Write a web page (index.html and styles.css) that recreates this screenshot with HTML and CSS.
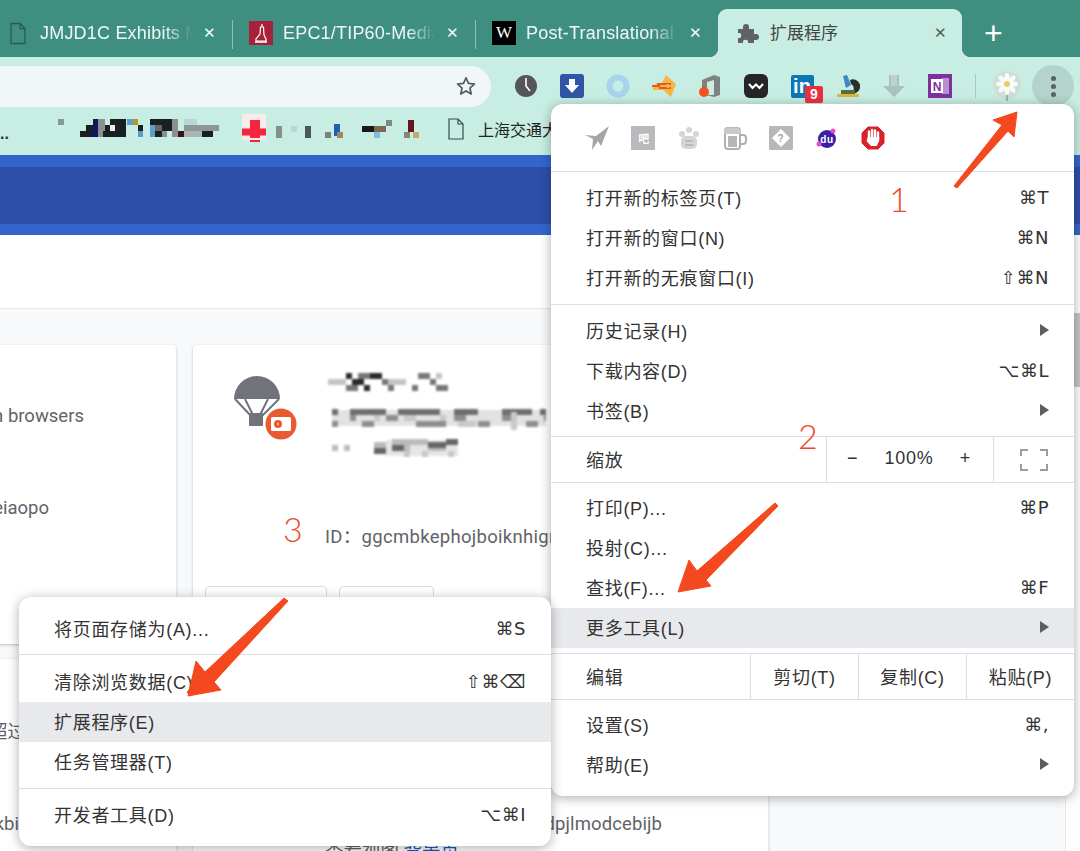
FILE: index.html
```html
<!DOCTYPE html>
<html lang="zh-CN">
<head>
<meta charset="utf-8">
<title>扩展程序</title>
<link rel="stylesheet" href="styles.css">
</head>
<body>
<div class="window">
  <div class="tabstrip">
    <div class="tab">
      <span class="fav"><svg width="24" height="24" viewBox="0 0 24 24"><path d="M5 2.500h9l5 5v15H5z M14 2.500v5h5" fill="none" stroke="#2c5a50" stroke-width="1.300"/></svg></span>
      <span class="tab-title">JMJD1C Exhibits M</span>
      <span class="tab-close">✕</span>
    </div>
    <div class="tab tab-sep">
      <span class="fav"><svg width="24" height="24" viewBox="0 0 24 24"><rect width="24" height="24" fill="#a8213a"/><path d="M13 3v3M11.500 6h3l.5 8 2 4v2H7v-2l4-5z" fill="none" stroke="#fff" stroke-width="1.200"/><path d="M6 21h12" stroke="#fff" stroke-width="1.500"/></svg></span>
      <span class="tab-title">EPC1/TIP60-Media</span>
      <span class="tab-close">✕</span>
    </div>
    <div class="tab tab-sep">
      <span class="fav fav-w">W</span>
      <span class="tab-title">Post-Translational</span>
      <span class="tab-close">✕</span>
    </div>
    <div class="tab tab-active">
      <span class="fav"><svg width="24" height="24" viewBox="0 0 24 24"><path d="M3 8h5V6a3 3 0 0 1 6 0v2h5v5h2a3 3 0 0 1 0 6h-2v3h-6v-2a3 3 0 0 0-5 0v2H3v-5h2a3 3 0 0 0 0-5H3z" fill="#5f6368"/></svg></span>
      <span class="tab-title">扩展程序</span>
      <span class="tab-close">✕</span>
    </div>
    <span class="new-tab">+</span>
  </div>

  <div class="toolbar">
    <div class="urlbar">
      <svg width="22" height="22" viewBox="0 0 24 24"><path d="M12 3l2.700 6.100 6.600.7-5 4.400 1.400 6.500-5.700-3.300-5.700 3.300 1.400-6.500-5-4.400 6.600-.7z" fill="none" stroke="#50585a" stroke-width="1.800" stroke-linejoin="round"/></svg>
    </div>
    <div class="ext-row">
      <span class="ext"><svg width="24" height="24" viewBox="0 0 24 24"><circle cx="12" cy="12" r="11" fill="#55565c"/><path d="M12 4v8l4 5" fill="none" stroke="#fff" stroke-width="1.600"/></svg></span>
      <span class="ext"><svg width="24" height="24" viewBox="0 0 24 24"><rect width="24" height="24" rx="3" fill="#2f56a4"/><path d="M9 5h6v6h4l-7 8-7-8h4z" fill="#fff"/></svg></span>
      <span class="ext"><svg width="24" height="24" viewBox="0 0 24 24"><circle cx="12" cy="12" r="8.500" fill="none" stroke="#a5d3f0" stroke-width="6"/></svg></span>
      <span class="ext"><svg width="26" height="26" viewBox="0 0 26 26"><path d="M15 2l10 9-5 13-8-7H2v-5l9-2z" fill="#f6b548"/><path d="M1 13h8M6 11h14M8 15h12" stroke="#e4591e" stroke-width="2"/><circle cx="17" cy="13" r="2" fill="#f6b548"/></svg></span>
      <span class="ext"><svg width="24" height="24" viewBox="0 0 24 24"><path d="M4 6l12-5 6 2v18l-6 2-8-2h8V6L9 8v6H4z" fill="#7f8281"/><circle cx="6" cy="18" r="5" fill="#ee5320"/></svg></span>
      <span class="ext"><svg width="24" height="24" viewBox="0 0 24 24"><rect width="24" height="24" rx="6" fill="#252527"/><path d="M5 10l3.500 4 3.500-3.500 3.500 3.500L19 10" fill="none" stroke="#fff" stroke-width="2"/></svg></span>
      <span class="ext ext-in"><span class="in-box">in</span><span class="in-badge">9</span></span>
      <span class="ext"><svg width="24" height="24" viewBox="0 0 24 24"><path d="M7 2l4-1 4 10-5 3z" fill="#3c86c9"/><path d="M14 6a7 7 0 0 1 6 13h-5a5 5 0 0 0 0-9z" fill="#26302c"/><path d="M1 20h22v3H1z" fill="#d9b93c"/><path d="M5 16h14v4H5z" fill="#5c6a44"/></svg></span>
      <span class="ext"><svg width="24" height="24" viewBox="0 0 24 24"><path d="M7 1h10v11h6L12 23 1 12h6z" fill="#a9c2bc"/><path d="M9 1h6v11H9z" fill="#bdd2cc"/></svg></span>
      <span class="ext"><svg width="24" height="24" viewBox="0 0 24 24"><rect width="24" height="24" fill="#7c319f"/><rect x="14" y="4" width="7" height="16" fill="#b68fcb"/><rect x="3" y="5" width="12" height="14" fill="#fff"/><text x="9" y="16.500" class="ic-text" fill="#7c319f" font-size="12" text-anchor="middle">N</text></svg></span>
      <span class="ext-sep"></span>
      <span class="ext ext-flower"><svg class="flower" width="32" height="32" viewBox="0 0 32 32"><circle cx="16" cy="15" r="14" fill="#d2dbd4"/><path d="M16 22v9" stroke="#8ab58c" stroke-width="2"/><g fill="#fff"><ellipse cx="16" cy="8" rx="2.500" ry="5"/><ellipse cx="16" cy="20" rx="2.500" ry="5"/><ellipse cx="10" cy="14" rx="5" ry="2.500"/><ellipse cx="22" cy="14" rx="5" ry="2.500"/><ellipse cx="11.500" cy="9.500" rx="2.500" ry="5" transform="rotate(-45 11.500 9.500)"/><ellipse cx="20.500" cy="9.500" rx="2.500" ry="5" transform="rotate(45 20.500 9.500)"/><ellipse cx="11.500" cy="18.500" rx="2.500" ry="5" transform="rotate(45 11.500 18.500)"/><ellipse cx="20.500" cy="18.500" rx="2.500" ry="5" transform="rotate(-45 20.500 18.500)"/></g><circle cx="16" cy="14" r="3" fill="#eec84f"/></svg></span>
      <span class="menu-btn"><i></i><i></i><i></i></span>
    </div>
  </div>

  <div class="bookmarks">
    <span class="bm-more">..</span>
    <svg class="bm-mosaic" width="362" height="30" viewBox="0 0 362 30" fill="none" stroke-width="6">
      <path d="M0 8h6" stroke="#8a9996"/>
      <path d="M35 8h5M33 14h7M33 20h7" stroke="#0c1a5c"/>
      <path d="M40 8h7M40 14h7M40 20h5M114 8h6M114 14h6M114 20h6M104 20h5" stroke="#8a9090"/>
      <path d="M28 14h7M22 20h11M52 8h16M47 14h5M57 14h11M45 20h23M80 14h5M92 8h22M104 14h10M97 20h7M144 20h11" stroke="#1a2022"/>
      <path d="M52 14h5" stroke="#eeeeee"/>
      <path d="M69 8h6M92 14h5M92 20h5M80 20h5" stroke="#5a9fcc"/><path d="M75 8h5" stroke="#b8962a"/>
      <path d="M97 14h7" stroke="#666"/><path d="M126 8h13" stroke="#b5d6da"/><path d="M126 14h35" stroke="#8f9696"/><path d="M126 20h18" stroke="#a8b6b6"/>
      <path d="M120 20h6" stroke="#401018"/>
      <path d="M184 12h24" stroke="#fbeaea" stroke-width="28"/>
      <path d="M184 18h24" stroke="#f2263c" stroke-width="7"/><path d="M197 6v22" stroke="#f2263c" stroke-width="10" stroke-dasharray="18 2"/>
      <path d="M221 12v12" stroke="#80928c"/><path d="M233 15h6" stroke="#bcd5d0"/><path d="M250 12v12" stroke="#48595c"/><path d="M267 21h6" stroke="#76847f"/>
      <path d="M279 10v12" stroke="#1f5fb8"/><path d="M285 21h-6" stroke="#a08a5a"/>
      <path d="M304 15h12" stroke="#18181c"/><path d="M316 15h12" stroke="#7a6a50"/><path d="M328 9h6" stroke="#7a8a88"/><path d="M316 21h6" stroke="#84bce0"/>
      <path d="M353 6v12" stroke="#661422"/><path d="M358 18v6" stroke="#c9a66a"/><path d="M346 21h6" stroke="#8a8478"/>
    </svg>
    <svg class="bm-doc" width="18" height="22" viewBox="0 0 18 22"><path d="M2 1h9l5 5v15H2z M11 1v5h5" fill="none" stroke="#3a4a46" stroke-width="1.200"/></svg>
    <span class="bm-text">上海交通大学</span>
  </div>

  <div class="brandbar"><div class="brandbar-inner"></div></div>

  <div class="page">
    <div class="page-head"></div>
    <div class="cards">
      <div class="card card-left">
        <p class="desc-end">extensions for chromium browsers</p>
        <p class="id-end">ID：hbkaaeiklmcgefbbnchadeiaopo</p>
      </div>
      <div class="card">
        <div class="card-top">
          <svg class="para" width="66" height="68" viewBox="0 0 66 68">
            <path d="M1 24a23 23 0 0 1 46 0z" fill="#70737a"/>
            <path d="M2 24l17 18M12 24l9 18M35 24l-9 18M46 24L28 42" stroke="#70737a" stroke-width="2"/>
            <rect x="16" y="38" width="14" height="13" rx="1" fill="#70737a"/>
            <circle cx="48" cy="49" r="15.500" fill="#e85a32"/>
            <rect x="38" y="42" width="20" height="14" rx="1.500" fill="#fff"/>
            <circle cx="45" cy="49" r="4" fill="#e85a32"/><circle cx="45" cy="49" r="1.200" fill="#f7cf4f"/>
          </svg>
          <svg class="blur-text" width="225" height="84" viewBox="0 0 225 84" fill="none" stroke-width="6">
            <path d="M4 45h214" stroke="#e2e2e2" stroke-width="16"/><path d="M58 75h72" stroke="#e6e6e6" stroke-width="16"/>
            <path d="M0 9h18M42 3h12M60 9h18M108 3h6" stroke="#c4c4c4"/>
            <path d="M18 3h6M24 9h12M36 15h6M42 3h12" stroke="#2a2a2a"/>
            <path d="M30 3h12M54 9h6M18 15h12M60 15h6M90 3h12M84 15h6M102 9h6M108 15h12" stroke="#777"/>
            <path d="M4 39h6M22 39h36M70 39h42M126 39h24M174 39h30M212 39h6" stroke="#6e6e6e"/>
            <path d="M4 51h6M22 45h6M34 51h12M58 45h12M88 51h30M126 45h12M150 51h12M174 45h12M198 51h12M216 45h2" stroke="#8e8e8e"/>
            <path d="M46 45h6M76 45h12M112 45h6M130 51h18M186 39v18" stroke="#c9c9c9"/>
            <path d="M4 75h6M16 75h6M46 72h12M64 69h36M76 75h6M100 75h18" stroke="#bbb"/>
            <path d="M46 78h12M64 75h12M100 72h18M118 69h12" stroke="#666"/>
            <path d="M76 81h6M94 81h6M120 81h6" stroke="#c8c8c8"/>
          </svg>
        </div>
        <p class="id-line">ID：ggcmbkephojboiknhigr</p>
        <div class="card-btns"><span class="btn btn-a"></span><span class="btn btn-b"></span></div>
      </div>
      <div class="card card-left card-low">
        <p class="desc-end desc-low">帮助您下载超过</p>
        <p class="id-end id-low">ID：aeblfdkhhhdcdjpifhhbdiojplfjkbi</p>
      </div>
      <div class="card card-low">
        <p class="id-line id-line-low">ID：kajibbejlbohfaggdiedpjlmodcebijb</p>
        <p class="view-line">查看视图 <a class="view-link">背景页</a></p>
      </div>
    </div>
    <div class="scroll-track"></div>
    <div class="scroll-thumb"></div>
  </div>

  <div class="menu menu-main">
    <div class="menu-icons">
      <span class="ext"><svg width="26" height="26" viewBox="0 0 26 26"><path d="M25 1l-8 20-3-5-6 9 1-11-8-4 11 1z" fill="#a4a6a6"/></svg></span>
      <span class="ext"><svg width="24" height="24" viewBox="0 0 24 24"><rect width="24" height="24" fill="#b9babb"/><text x="13" y="17" class="ic-text" fill="#fff" font-size="11" text-anchor="middle">吧</text></svg></span>
      <span class="ext"><svg width="24" height="24" viewBox="0 0 24 24"><g fill="#d4d5d5"><circle cx="12" cy="4" r="3"/><circle cx="5" cy="8" r="3"/><circle cx="19" cy="8" r="3"/><rect x="4" y="10" width="16" height="13" rx="5"/></g><path d="M8 15h8M8 19h8" stroke="#b0b1b1" stroke-width="1.500"/></svg></span>
      <span class="ext"><svg width="26" height="26" viewBox="0 0 26 26"><rect x="3" y="3" width="15" height="21" rx="3" fill="#fff" stroke="#aeafaf" stroke-width="2"/><path d="M6 11h9v11H6z" fill="#b5b6b6"/><path d="M18 10h3a3 3 0 0 1 3 3v3a3 3 0 0 1-3 3h-3" fill="none" stroke="#aeafaf" stroke-width="2"/><path d="M2 5q4-4 8-2 5-2 9 2v4H2z" fill="#c8c9c9"/></svg></span>
      <span class="ext"><svg width="24" height="24" viewBox="0 0 24 24"><rect width="24" height="24" rx="1" fill="#b7b8b8"/><path d="M12 3l9 9-9 9-9-9z" fill="#fff"/><text x="12" y="16" class="ic-text" fill="#a0a0a0" font-size="10" text-anchor="middle">?</text></svg></span>
      <span class="ext"><svg width="22" height="22" viewBox="0 0 22 22"><circle cx="11" cy="12" r="9" fill="#3b1fa8"/><circle cx="17" cy="4" r="2.500" fill="#e44fc0"/><circle cx="3" cy="17" r="2.500" fill="#e44fc0"/><text x="11" y="15.500" class="ic-text" fill="#fff" font-size="10" text-anchor="middle">du</text></svg></span>
      <span class="ext"><svg width="24" height="24" viewBox="0 0 24 24"><path d="M7 1h10l6 6v10l-6 6H7l-6-6V7z" fill="#d8232a" stroke="#d8232a" stroke-linejoin="round"/><path d="M8 5.500v7M11 4v7M14 4.500v7M17 6.500v7" stroke="#fff" stroke-width="2.400" stroke-linecap="round"/><path d="M6.800 11h11.400v4l-2.500 5H10l-4.500-5z" fill="#fff"/></svg></span>
    </div>
    <div class="sep"></div>
    <div class="group group-top group-bot">
      <div class="item"><span>打开新的标签页(T)</span><span class="key">⌘T</span></div>
      <div class="item"><span>打开新的窗口(N)</span><span class="key">⌘N</span></div>
      <div class="item"><span>打开新的无痕窗口(I)</span><span class="key">⇧⌘N</span></div>
    </div>
    <div class="sep"></div>
    <div class="group group-top">
      <div class="item"><span>历史记录(H)</span><i class="sub"></i></div>
      <div class="item"><span>下载内容(D)</span><span class="key">⌥⌘L</span></div>
      <div class="item"><span>书签(B)</span><i class="sub"></i></div>
    </div>
    <div class="sep"></div>
    <div class="split split-zoom">
      <span class="split-label">缩放</span>
      <div class="zoom-ctl">
        <span class="zoom-sym">−</span><span class="zoom-val">100%</span><span class="zoom-sym">+</span>
      </div>
      <div class="zoom-full"><svg width="28" height="22" viewBox="0 0 28 22" fill="none" stroke="#9a9da1" stroke-width="2"><path d="M1 7V1h7M20 1h7v6M27 15v6h-7M8 21H1v-6"/></svg></div>
    </div>
    <div class="sep"></div>
    <div class="group">
      <div class="item"><span>打印(P)...</span><span class="key">⌘P</span></div>
      <div class="item"><span>投射(C)...</span></div>
      <div class="item"><span>查找(F)...</span><span class="key">⌘F</span></div>
      <div class="item item-hover"><span>更多工具(L)</span><i class="sub"></i></div>
    </div>
    <div class="sep"></div>
    <div class="split split-edit">
      <span class="split-label">编辑</span>
      <span class="edit-cell">剪切(T)</span>
      <span class="edit-cell">复制(C)</span>
      <span class="edit-cell">粘贴(P)</span>
    </div>
    <div class="sep"></div>
    <div class="group">
      <div class="item"><span>设置(S)</span><span class="key">⌘,</span></div>
      <div class="item"><span>帮助(E)</span><i class="sub"></i></div>
    </div>
  </div>

  <div class="menu menu-sub">
    <div class="group sub-first">
      <div class="item"><span>将页面存储为(A)...</span><span class="key">⌘S</span></div>
    </div>
    <div class="sep"></div>
    <div class="group sub-mid">
      <div class="item"><span>清除浏览数据(C)...</span><span class="key">⇧⌘⌫</span></div>
      <div class="item item-hover"><span>扩展程序(E)</span></div>
      <div class="item"><span>任务管理器(T)</span></div>
    </div>
    <div class="sep"></div>
    <div class="group sub-last">
      <div class="item"><span>开发者工具(D)</span><span class="key">⌥⌘I</span></div>
    </div>
  </div>

  <svg class="marks" width="1080" height="851" viewBox="0 0 1080 851">
    <g fill="#f4491f" stroke="#f4491f" stroke-width="1" stroke-linejoin="round">
      <path d="M1017 112L993 120 1002 125 954 186 957 188 1008 131 1014 137z"/>
      <path d="M678 592L689 560 697 571 775 503 778 506 706 580 711 586z"/>
      <path d="M188 696L196 661 205 672 284 598 288 601 214 682 221 690z"/>
    </g>
  </svg>
  <span class="num num-1">1</span>
  <span class="num num-2">2</span>
  <span class="num num-3">3</span>
</div>
</body>
</html>
```

FILE: styles.css
```css
* { box-sizing: border-box; }
html, body { margin: 0; padding: 0; }
body {
  width: 1080px;
  height: 851px;
  overflow: hidden;
  background: #fff;
  font-family: "Liberation Sans", "Noto Sans CJK SC", sans-serif;
  color: #333;
}
p { margin: 0; }
.window { position: relative; width: 1080px; height: 851px; overflow: hidden; }
.ic-text { font-family: "Liberation Sans", "Noto Sans CJK SC", sans-serif; font-weight: 700; }

/* tabs */
.tabstrip {
  display: flex;
  align-items: flex-end;
  height: 57px;
  margin-left: -11px;
  background: #3f8f80;
  width: 1091px;
}
.tab {
  position: relative;
  display: flex;
  align-items: center;
  flex: none;
  width: 243px;
  height: 48px;
  padding: 0 12px 0 17px;
  color: #eef7f4;
  font-size: 18px;
  letter-spacing: .2px;
}
.tab-sep::before {
  content: "";
  position: absolute;
  left: 0;
  top: 11px;
  width: 1px;
  height: 29px;
  background: #8fc0b5;
}
.tab-title {
  flex: 1;
  min-width: 0;
  margin-left: 10px;
  white-space: nowrap;
  overflow: hidden;
  -webkit-mask-image: linear-gradient(90deg, #000 82%, transparent 100%);
  mask-image: linear-gradient(90deg, #000 82%, transparent 100%);
}
.fav { display: flex; flex: none; width: 24px; height: 24px; }
.fav-w {
  align-items: center;
  justify-content: center;
  background: #000;
  color: #fff;
  font-family: "Liberation Serif", serif;
  font-size: 17px;
}
.tab-close { flex: none; width: 20px; margin-left: 8px; text-align: center; font-size: 15px; color: #f3fbf8; }
.tab-active {
  width: 244px;
  background: #c8ede2;
  color: #444;
  border-radius: 9px 9px 0 0;
  font-size: 17px;
  letter-spacing: 0;
}
.tab-active::before,
.tab-active::after {
  content: "";
  position: absolute;
  bottom: 0;
  width: 9px;
  height: 9px;
}
.tab-active::before { left: -9px; background: radial-gradient(circle at 0 0, transparent 9px, #c8ede2 9.500px); }
.tab-active::after { right: -9px; background: radial-gradient(circle at 100% 0, transparent 9px, #c8ede2 9.500px); }
.tab-active .tab-close { color: #50585a; }
.tab-active .tab-title { -webkit-mask-image: none; mask-image: none; margin-left: 11px; padding-bottom: 3px; }
.new-tab { margin-left: 22px; align-self: center; color: #fff; font-size: 32px; line-height: 32px; padding-top: 8px; }

/* toolbar */
.toolbar {
  display: flex;
  align-items: center;
  height: 50px;
  padding-top: 8px;
  background: #c8ede2;
}
.urlbar {
  display: flex;
  align-items: center;
  justify-content: flex-end;
  flex: none;
  width: 491px;
  height: 41px;
  padding-right: 14px;
  background: #f1f6f6;
  border-radius: 0 21px 21px 0;
}
.ext-row { display: flex; align-items: center; margin-left: 12px; }
.ext { display: flex; align-items: center; justify-content: center; flex: none; width: 46px; height: 42px; }
.ext-in { position: relative; }
.in-box {
  width: 23px;
  height: 23px;
  background: #0b78b5;
  color: #fff;
  font-weight: 700;
  font-size: 20px;
  line-height: 23px;
  text-align: center;
  border-radius: 2px;
}
.in-badge {
  position: absolute;
  left: 26px;
  top: 21px;
  width: 18px;
  height: 17px;
  background: #e8313f;
  color: #fff;
  font-size: 14px;
  font-weight: 700;
  line-height: 17px;
  text-align: center;
  border-radius: 2px;
}
.ext-sep { width: 1px; height: 24px; margin: 0 8px 0 12px; background: #a9c6be; }
.ext-flower { width: 46px; }
.flower { opacity: .85; filter: blur(.4px); }
.menu-btn {
  display: flex;
  flex-direction: column;
  align-items: center;
  justify-content: center;
  gap: 3px;
  width: 42px;
  height: 42px;
  margin-left: 2px;
  background: #b4d3cb;
  border-radius: 50%;
}
.menu-btn i { width: 5px; height: 5px; border-radius: 50%; background: #56625f; }

/* bookmarks */
.bookmarks {
  display: flex;
  align-items: center;
  height: 48px;
  padding-bottom: 4px;
  background: #c8ede2;
}
.bm-more { width: 58px; padding-top: 10px; font-size: 16px; font-weight: 700; color: #333; }
.bm-mosaic { flex: none; filter: blur(.5px); }
.bm-doc { flex: none; margin-left: 27px; }
.bm-text { margin-left: 13px; font-size: 16px; color: #222; white-space: nowrap; }

/* header band */
.brandbar { height: 80px; padding: 12px 0 11px; background: #3366cc; }
.brandbar-inner { height: 57px; background: #2c50a8; }

/* page */
.page { position: relative; height: 616px; background: #f8f9fa; }
.page-head { height: 74px; background: #fff; border-bottom: 1px solid #e4e5e7; }
.cards {
  display: grid;
  grid-template-columns: 575px 575px;
  grid-template-rows: 299px 300px;
  gap: 15px 17px;
  margin: 36px 0 0 -399px;
}
.card {
  position: relative;
  background: #fff;
  border-radius: 4px;
  box-shadow: 0 1px 3px rgba(60, 64, 67, .3);
  font-family: Roboto, "Noto Sans CJK SC", sans-serif;
  font-size: 18.500px;
  color: #5f6368;
  overflow: hidden;
}
.card-left { text-align: right; white-space: nowrap; }
.desc-end { margin: 59px 92px 0 0; line-height: 24px; }
.id-end { margin-top: 68px; padding-right: 127px; line-height: 24px; }
.desc-low { margin: 61px 150px 0 0; }
.id-low { margin-top: 68px; padding-right: 157px; }
.card-top { display: flex; align-items: flex-start; padding: 28px 0 0 40px; }
.para { flex: none; margin-top: 2px; }
.blur-text { flex: none; margin-left: 29px; filter: blur(.8px); }
.id-line { margin: 68px 0 0 132px; line-height: 24px; letter-spacing: .3px; white-space: nowrap; }
.card-btns { display: flex; gap: 12px; margin: 37px 0 0 12px; }
.btn { height: 36px; border: 1px solid #dadce0; border-radius: 4px; }
.btn-a { width: 122px; }
.btn-b { width: 95px; }
.id-line-low { margin-top: 153px; margin-left: 0; padding-right: 106px; text-align: right; letter-spacing: .1px; }
.view-line { margin: 4px 0 0 132px; line-height: 24px; }
.view-link { color: #1a56c4; }
.scroll-track { position: absolute; right: 0; top: 0; bottom: 0; width: 15px; background: #fdfdfd; border-left: 1px solid #e8e9eb; }
.scroll-thumb { position: absolute; right: 0; top: 78px; width: 8px; height: 74px; background: #c2c3c5; }

/* menus */
.menu {
  position: absolute;
  background: #fff;
  border-radius: 12px;
  box-shadow: 0 2px 12px rgba(0, 0, 0, .32);
  font-size: 18px;
  letter-spacing: .7px;
  color: #333;
}
.menu-main { left: 551px; top: 104px; width: 523px; height: 692px; }
.menu-sub { left: 19px; top: 597px; width: 532px; height: 249px; padding-top: 12px; }
.menu-icons { display: flex; align-items: center; height: 67px; padding: 1px 0 0 23px; }
.sep { height: 1px; background: #dcdde0; }
.group { padding: 5px 0; }
.group-top { padding-top: 6px; }
.group-bot { padding-bottom: 6px; }
.sub-first { padding: 0 0 5px; }
.sub-mid { padding: 7px 0 6px; }
.sub-last { padding: 6px 0 0; }
.item {
  display: flex;
  align-items: center;
  justify-content: space-between;
  height: 40px;
  padding: 0 25px 2px 35px;
  white-space: nowrap;
}
.item-hover { background: #e8e9ec; }
.key { font-family: "DejaVu Sans", "Liberation Sans", sans-serif; font-size: 18px; letter-spacing: .5px; }
.sub {
  width: 0;
  height: 0;
  border-left: 9px solid #5a5e63;
  border-top: 6px solid transparent;
  border-bottom: 6px solid transparent;
}
.split { display: flex; align-items: center; }
.split-zoom { height: 45px; }
.split-edit { height: 45px; }
.split-label { flex: 1; padding: 0 0 2px 35px; }
.zoom-ctl {
  display: flex;
  align-items: center;
  justify-content: space-between;
  align-self: stretch;
  width: 168px;
  padding: 0 22px 2px 20px;
  border-left: 1px solid #dcdde0;
  border-right: 1px solid #dcdde0;
}
.zoom-full { display: flex; justify-content: center; width: 80px; }
.edit-cell {
  display: flex;
  align-items: center;
  justify-content: center;
  align-self: stretch;
  width: 108px;
  padding-bottom: 2px;
  border-left: 1px solid #dcdde0;
}

/* annotations */
.marks { position: absolute; left: 0; top: 0; pointer-events: none; }
.num { position: absolute; color: #f0492a; font-family: Lato, "Liberation Sans", sans-serif; font-weight: 300; font-size: 34px; line-height: 34px; }
.num-1 { left: 889px; top: 182px; }
.num-2 { left: 798px; top: 419px; }
.num-3 { left: 283px; top: 512px; }
```
